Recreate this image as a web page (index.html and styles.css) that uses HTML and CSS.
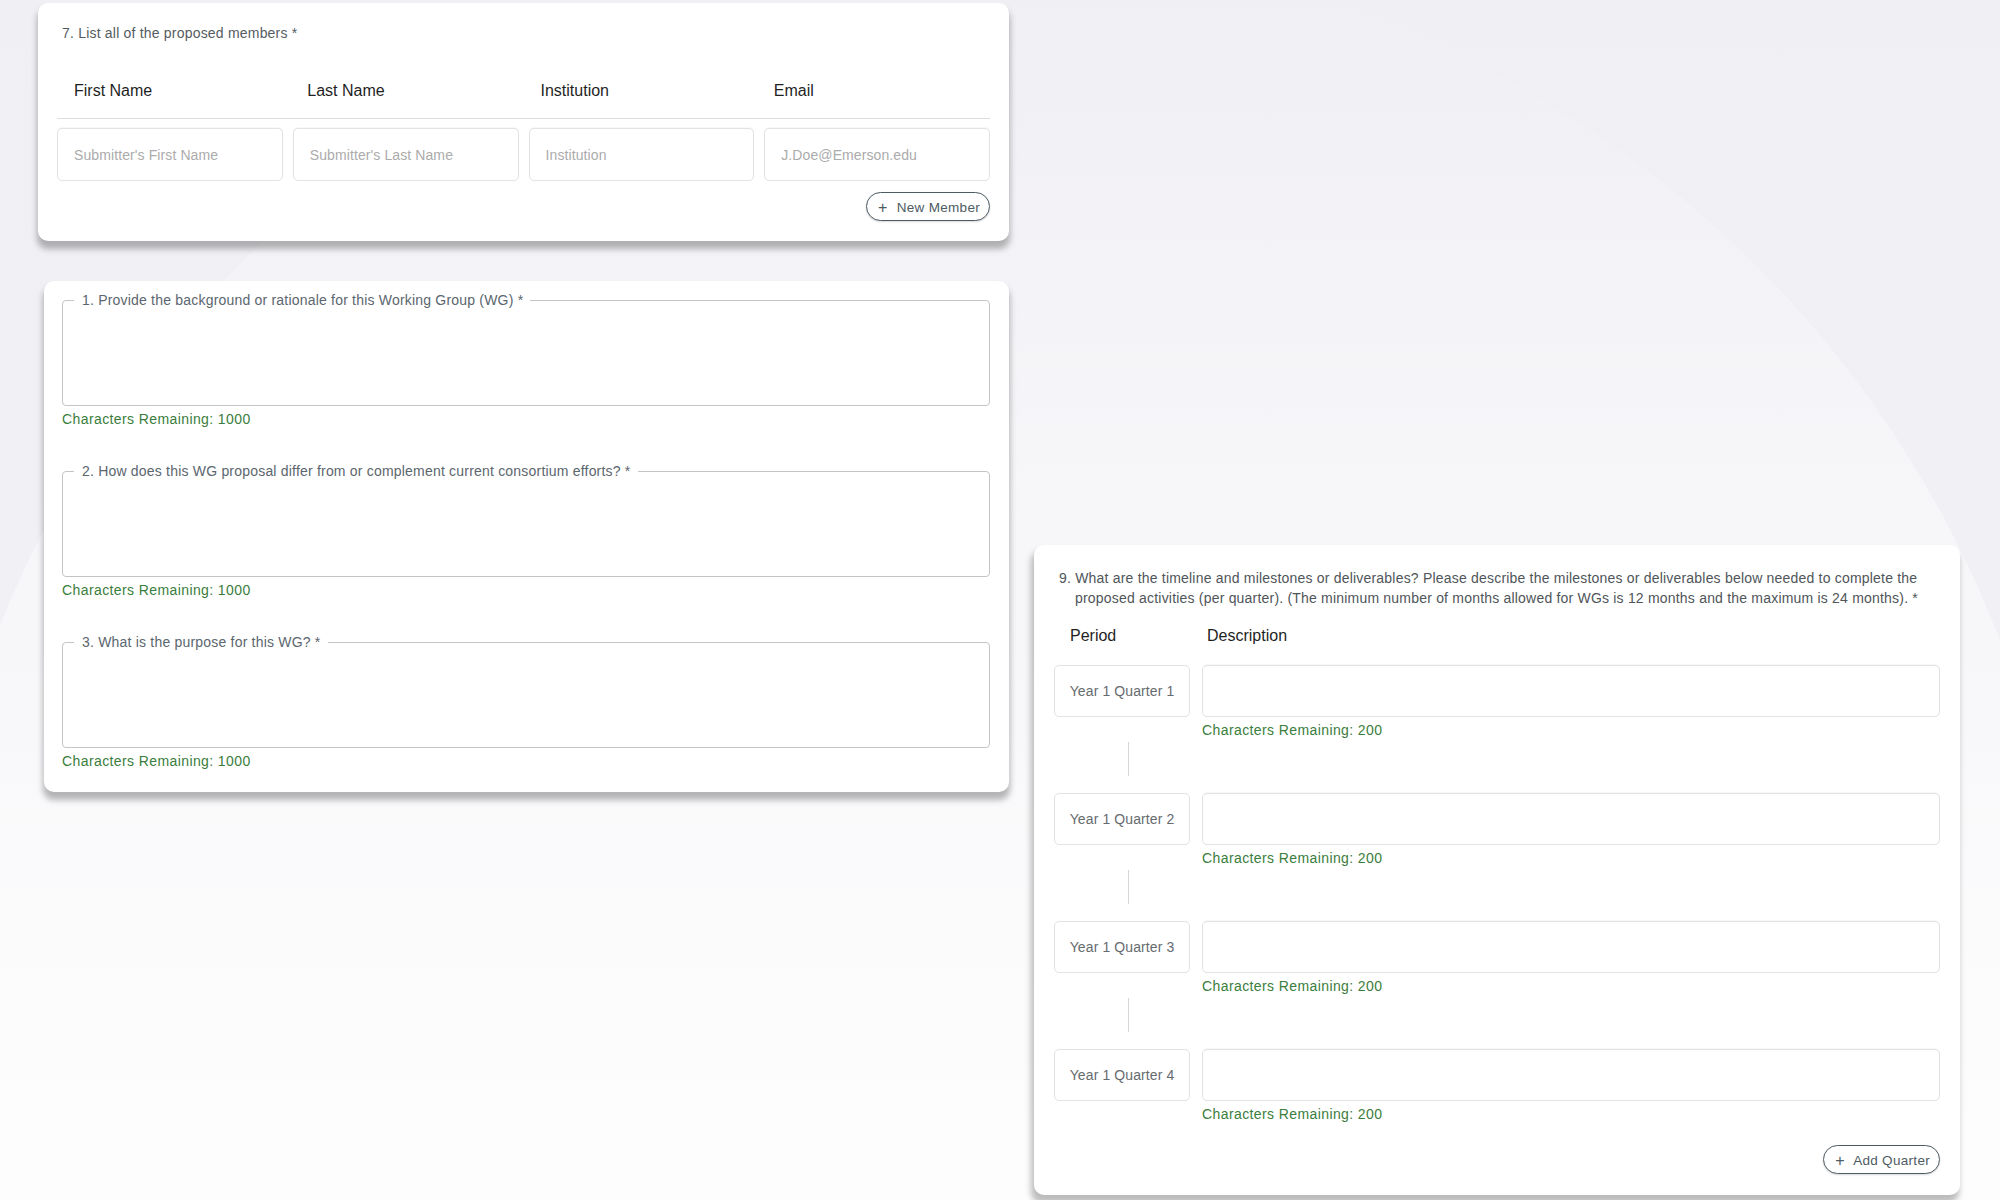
FILE: index.html
```html
<!DOCTYPE html>
<html lang="en">
<head>
    <meta charset="UTF-8">
    <meta name="viewport" content="width=device-width, initial-scale=1.0">
    <title>Working Group Proposal</title>
    <link rel="stylesheet" href="styles.css">
</head>
<body>
    <div class="page">

        <!-- Left column -->
        <div class="left-col">

            <!-- Members -->
            <div class="card members-card">
                <div class="question">7. List all of the proposed members *</div>
                <table class="members-head">
                    <tr>
                        <th>First Name</th>
                        <th>Last Name</th>
                        <th>Institution</th>
                        <th>Email</th>
                    </tr>
                </table>
                <div class="member-row">
                    <input type="text" class="box-input" placeholder="Submitter's First Name">
                    <input type="text" class="box-input" placeholder="Submitter's Last Name">
                    <input type="text" class="box-input" placeholder="Institution">
                    <input type="text" class="box-input" placeholder="J.Doe@Emerson.edu">
                </div>
                <div class="actions">
                    <button class="pill-button"><span class="plus">+</span> New Member</button>
                </div>
            </div>

            <!-- Long answers -->
            <div class="card answers-card">
                <div class="answer">
                    <fieldset class="outlined">
                        <legend>1. Provide the background or rationale for this Working Group (WG) *</legend>
                        <textarea></textarea>
                    </fieldset>
                    <div class="chars">Characters Remaining: 1000</div>
                </div>
                <div class="answer">
                    <fieldset class="outlined">
                        <legend>2. How does this WG proposal differ from or complement current consortium efforts? *</legend>
                        <textarea></textarea>
                    </fieldset>
                    <div class="chars">Characters Remaining: 1000</div>
                </div>
                <div class="answer">
                    <fieldset class="outlined">
                        <legend>3. What is the purpose for this WG? *</legend>
                        <textarea></textarea>
                    </fieldset>
                    <div class="chars">Characters Remaining: 1000</div>
                </div>
            </div>
        </div>

        <!-- Right column -->
        <div class="right-col">
            <div class="card timeline-card">
                <div class="question hanging">9. What are the timeline and milestones or deliverables? Please describe the milestones or deliverables below needed to complete the proposed activities (per quarter). (The minimum number of months allowed for WGs is 12 months and the maximum is 24 months). *</div>

                <div class="timeline-head">
                    <div class="col-period">Period</div>
                    <div class="col-desc">Description</div>
                </div>

                <div class="quarter">
                    <div class="period">Year 1 Quarter 1</div>
                    <input type="text" class="box-input desc">
                    <div class="connector"></div>
                    <div class="chars">Characters Remaining: 200</div>
                </div>
                <div class="quarter">
                    <div class="period">Year 1 Quarter 2</div>
                    <input type="text" class="box-input desc">
                    <div class="connector"></div>
                    <div class="chars">Characters Remaining: 200</div>
                </div>
                <div class="quarter">
                    <div class="period">Year 1 Quarter 3</div>
                    <input type="text" class="box-input desc">
                    <div class="connector"></div>
                    <div class="chars">Characters Remaining: 200</div>
                </div>
                <div class="quarter last">
                    <div class="period">Year 1 Quarter 4</div>
                    <input type="text" class="box-input desc">
                    <div class="chars">Characters Remaining: 200</div>
                </div>

                <div class="actions">
                    <button class="pill-button"><span class="plus">+</span> Add Quarter</button>
                </div>
            </div>
        </div>
    </div>
</body>
</html>
```

FILE: styles.css
```css
/* Page */
body {
    margin: 0;
    font-family: "Liberation Sans", Arial, sans-serif;
    color: #222;
    min-height: 1200px;
    /* top fade, big soft circle, base wash */
    background:
        linear-gradient(to bottom, #f0eff4 0, rgba(240, 239, 244, 0) 520px),
        radial-gradient(circle 1075px at 997px 1026px, rgba(255, 255, 255, 0.45) 1074px, rgba(255, 255, 255, 0) 1075px),
        linear-gradient(to bottom, #f0eff4 0, #f1f0f5 650px, #f8f8fa 950px, #fcfcfd 1200px);
    background-repeat: no-repeat;
    background-size: 2000px 1200px;
}

.page {
    display: flex;
    align-items: flex-start;
}

.left-col {
    width: 971px;
    margin-left: 38px;
    padding-top: 3px;
    display: flex;
    flex-direction: column;
    gap: 40px;
}

.right-col {
    width: 926px;
    margin-left: 25px;
    padding-top: 545px;
}

/* Cards */
.card {
    background-color: #ffffff;
    border-radius: 10px;
    box-shadow: 0 7px 6px 1px rgba(0, 0, 0, 0.28);
}

.question {
    font-size: 14px;
    line-height: 20px;
    color: #555c61;
    letter-spacing: 0.2px;
}

/* Members card */
.members-card {
    padding: 20px 19px 20px;
}
.members-card .question {
    padding-left: 5px;
}
.members-head {
    width: 100%;
    margin-top: 20px;
    border-collapse: collapse;
    table-layout: fixed;
}
.members-head th {
    text-align: left;
    font-weight: normal;
    font-size: 16px;
    color: #1f1f1f;
    height: 55px;
    padding: 0 16px 0 17px;
    border-bottom: 1px solid #dedede;
}
.member-row {
    display: grid;
    grid-template-columns: repeat(4, 1fr);
    gap: 10px;
    margin-top: 9px;
}

.box-input {
    box-sizing: border-box;
    height: 53px;
    width: 100%;
    border: 1px solid #e2e2e6;
    border-radius: 5px;
    padding: 0 16px;
    font-family: "Liberation Sans", Arial, sans-serif;
    font-size: 14px;
    letter-spacing: 0.1px;
    color: #333;
    background: #fff;
    box-shadow: 0 -1px 1px rgba(0, 0, 0, 0.03);
}
.box-input::placeholder {
    color: #ababab;
}

.actions {
    display: flex;
    justify-content: flex-end;
    margin-top: 11px;
}
.pill-button {
    height: 29px;
    padding: 0 9px 0 11px;
    border: 1.5px solid #4d5b63;
    border-radius: 15px;
    background: #fff;
    color: #4d5b63;
    font-family: "Liberation Sans", Arial, sans-serif;
    font-size: 13.5px;
    letter-spacing: 0.3px;
    box-shadow: 0 1px 2px rgba(0, 0, 0, 0.15);
    cursor: pointer;
}
.pill-button .plus {
    font-size: 16px;
    margin-right: 5px;
    position: relative;
    top: 1px;
}

/* Long answer card */
.answers-card {
    margin-left: 6px;
    padding: 9px 19px 21px 18px;
    display: flex;
    flex-direction: column;
    gap: 32px;
}
.answers-card .chars {
    margin-top: 3px;
}
.outlined {
    margin: 0;
    padding: 0 11px 0 11px;
    border: 1px solid #c4c4c4;
    border-radius: 4px;
}
.outlined legend {
    padding: 0 7px 0 8px;
    font-size: 14px;
    line-height: 20px;
    letter-spacing: 0.2px;
    color: #5b666e;
}
.outlined textarea {
    display: block;
    box-sizing: border-box;
    width: 100%;
    height: 95px;
    border: none;
    resize: none;
    outline: none;
    font-family: inherit;
}

.chars {
    font-size: 14px;
    line-height: 20px;
    color: #3a7d3c;
    letter-spacing: 0.4px;
    margin-top: 2px;
}

/* Timeline card */
.timeline-card {
    padding: 23px 20px 20px;
    min-height: 607px;
    box-shadow: -2px 7px 6px 1px rgba(0, 0, 0, 0.26);
}
.question.hanging {
    padding-left: 21px;
    text-indent: -16px;
    color: #4f5559;
}
.timeline-head {
    display: grid;
    grid-template-columns: 136px 1fr;
    column-gap: 12px;
    margin-top: 18px;
    font-size: 16px;
    line-height: 20px;
    color: #1f1f1f;
}
.col-period {
    padding-left: 16px;
}
.col-desc {
    padding-left: 5px;
}

.quarter {
    display: grid;
    grid-template-columns: 136px 1fr;
    column-gap: 12px;
    margin-top: 19px;
}
.quarter + .quarter {
    margin-top: 0;
}
.period {
    box-sizing: border-box;
    height: 52px;
    border: 1px solid #e2e2e6;
    border-radius: 5px;
    display: flex;
    align-items: center;
    justify-content: center;
    font-size: 14px;
    letter-spacing: 0.1px;
    color: #666b6f;
}
.quarter .desc {
    height: 52px;
}
.quarter .chars {
    grid-column: 2;
    grid-row: 2;
    margin-top: 3px;
}
.connector {
    grid-column: 1;
    grid-row: 2;
    width: 1px;
    height: 34px;
    margin: 25px 0 17px 74px;
    background-color: #d6d6d6;
}
.quarter.last + .actions {
    margin-top: 21px;
}
```
